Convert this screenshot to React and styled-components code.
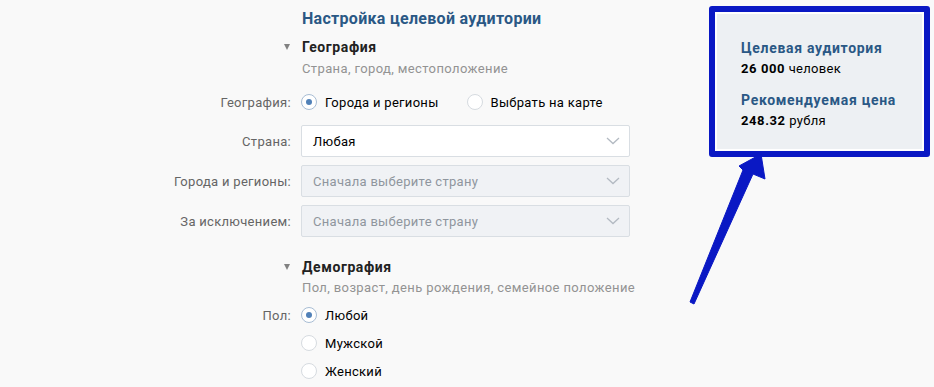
import React from 'react'
import styled, { createGlobalStyle } from 'styled-components'

const Global = createGlobalStyle`
  html, body { margin: 0; padding: 0; background: #f9f9f9; }
  body { font-family: Roboto, "Open Sans", sans-serif; color: #000; letter-spacing: 0.3px; }
`

const Page = styled.div`
  position: relative;
  width: 934px;
  height: 387px;
  overflow: hidden;
  display: flex;
  align-items: flex-start;
`

const Form = styled.div`
  width: 630px;
  display: grid;
  grid-template-columns: 291px 329px;
  column-gap: 10px;
  align-items: center;
  padding-top: 9px;
`

const Title = styled.div`
  grid-column: 2;
  height: 20px;
  line-height: 20px;
  font-size: 16px;
  font-weight: 700;
  letter-spacing: 0.3px;
  color: #2a5885;
  padding-left: 1px;
`

const Caret = styled.div`
  grid-column: 1;
  justify-self: end;
  margin-top: ${p => p.$mt}px;
  margin-right: 1px;
  width: 0;
  height: 0;
  border-left: 3.5px solid transparent;
  border-right: 3.5px solid transparent;
  border-top: 6px solid #828282;
`

const SectionTitle = styled.div`
  grid-column: 2;
  margin-top: ${p => p.$mt}px;
  height: 20px;
  line-height: 20px;
  font-size: 14px;
  font-weight: 700;
  letter-spacing: 0.6px;
  color: #222;
  padding-left: 1px;
`

const Hint = styled.div`
  grid-column: 2;
  margin-top: ${p => p.$mt}px;
  height: 20px;
  line-height: 20px;
  font-size: 13px;
  letter-spacing: 0.38px;
  color: #939393;
  padding-left: 1px;
  white-space: nowrap;
`

const Label = styled.div`
  grid-column: 1;
  justify-self: end;
  margin-top: ${p => p.$mt || 0}px;
  font-size: 13px;
  color: #656565;
`

const Field = styled.div`
  grid-column: 2;
  margin-top: ${p => p.$mt || 0}px;
  display: flex;
  align-items: center;
  gap: 28px;
  height: ${p => p.$h || 20}px;
`

const RadioItem = styled.label`
  display: flex;
  align-items: center;
  gap: 8px;
  font-size: 13px;
  color: #000;
`

const Circle = styled.span`
  box-sizing: border-box;
  width: 16px;
  height: 16px;
  border-radius: 50%;
  background: #fff;
  border: 1px solid ${p => (p.$on ? '#a8bdd4' : '#d6dbe0')};
  display: flex;
  align-items: center;
  justify-content: center;
  &::after {
    content: '';
    width: 6px;
    height: 6px;
    border-radius: 50%;
    background: ${p => (p.$on ? '#5181b8' : 'transparent')};
  }
`

const Select = styled.div`
  grid-column: 2;
  margin-top: ${p => p.$mt}px;
  box-sizing: border-box;
  height: 32px;
  display: flex;
  align-items: center;
  justify-content: space-between;
  padding: 0 9px 0 11px;
  border: 1px solid #d9dee3;
  border-radius: 2px;
  background: ${p => (p.$disabled ? '#f0f2f5' : '#fff')};
  color: ${p => (p.$disabled ? '#8f969e' : '#000')};
  font-size: 13px;
`

const Chevron = () => (
  <svg width="14" height="8" viewBox="0 0 14 8">
    <path d="M1 1l6 5.5L13 1" fill="none" stroke="#b3bac2" strokeWidth="1.3" />
  </svg>
)

const Summary = styled.div`
  margin-left: 79px;
  margin-top: 6px;
  width: 221px;
  height: 151px;
  box-sizing: border-box;
  border: 6px solid #0a18c4;
  border-radius: 3px;
  background: #fff;
  padding: 2px;
`

const SummaryInner = styled.div`
  height: 100%;
  box-sizing: border-box;
  background: #edf0f3;
  padding: 24px 0 0 24px;
`

const Stat = styled.div`
  margin-bottom: 10px;
`

const StatTitle = styled.div`
  font-size: 14px;
  font-weight: 700;
  letter-spacing: 0.7px;
  color: #2a5885;
  line-height: 20px;
`

const StatValue = styled.div`
  font-size: 13px;
  line-height: 22px;
  color: #000;
  b { font-weight: 700; letter-spacing: 0.6px; }
`

const Arrow = styled.svg`
  position: absolute;
  left: 0;
  top: 0;
  pointer-events: none;
`

const Radio = ({ on, children }) => (
  <RadioItem>
    <Circle $on={on} />
    {children}
  </RadioItem>
)

export default function App() {
  return (
    <Page>
      <Global />
      <Form>
        <Title>Настройка целевой аудитории</Title>

        <Caret $mt={8} />
        <SectionTitle $mt={8}>География</SectionTitle>
        <Hint $mt={2}>Страна, город, местоположение</Hint>

        <Label $mt={13}>География:</Label>
        <Field $mt={13}>
          <Radio on>Города и регионы</Radio>
          <Radio>Выбрать на карте</Radio>
        </Field>

        <Label $mt={13}>Страна:</Label>
        <Select $mt={13}>
          Любая
          <Chevron />
        </Select>

        <Label $mt={8}>Города и регионы:</Label>
        <Select $mt={8} $disabled>
          Сначала выберите страну
          <Chevron />
        </Select>

        <Label $mt={8}>За исключением:</Label>
        <Select $mt={8} $disabled>
          Сначала выберите страну
          <Chevron />
        </Select>

        <Caret $mt={20} />
        <SectionTitle $mt={20}>Демография</SectionTitle>
        <Hint $mt={1}>Пол, возраст, день рождения, семейное положение</Hint>

        <Label $mt={3}>Пол:</Label>
        <Field $mt={3} $h={28}>
          <Radio on>Любой</Radio>
        </Field>
        <Field $h={28}>
          <Radio>Мужской</Radio>
        </Field>
        <Field $h={28}>
          <Radio>Женский</Radio>
        </Field>
      </Form>

      <Summary>
        <SummaryInner>
          <Stat>
            <StatTitle>Целевая аудитория</StatTitle>
            <StatValue><b>26 000</b> человек</StatValue>
          </Stat>
          <Stat>
            <StatTitle>Рекомендуемая цена</StatTitle>
            <StatValue><b>248.32</b> рубля</StatValue>
          </Stat>
        </SummaryInner>
      </Summary>

      <Arrow width="934" height="387" viewBox="0 0 934 387">
        <polygon
          points="690,302 743,170 739,166 761,154 765,179 753,174 694,304"
          fill="#0a18c4"
          strokeLinejoin="round"
          stroke="#0a18c4"
          strokeWidth="1"
        />
      </Arrow>
    </Page>
  )
}
